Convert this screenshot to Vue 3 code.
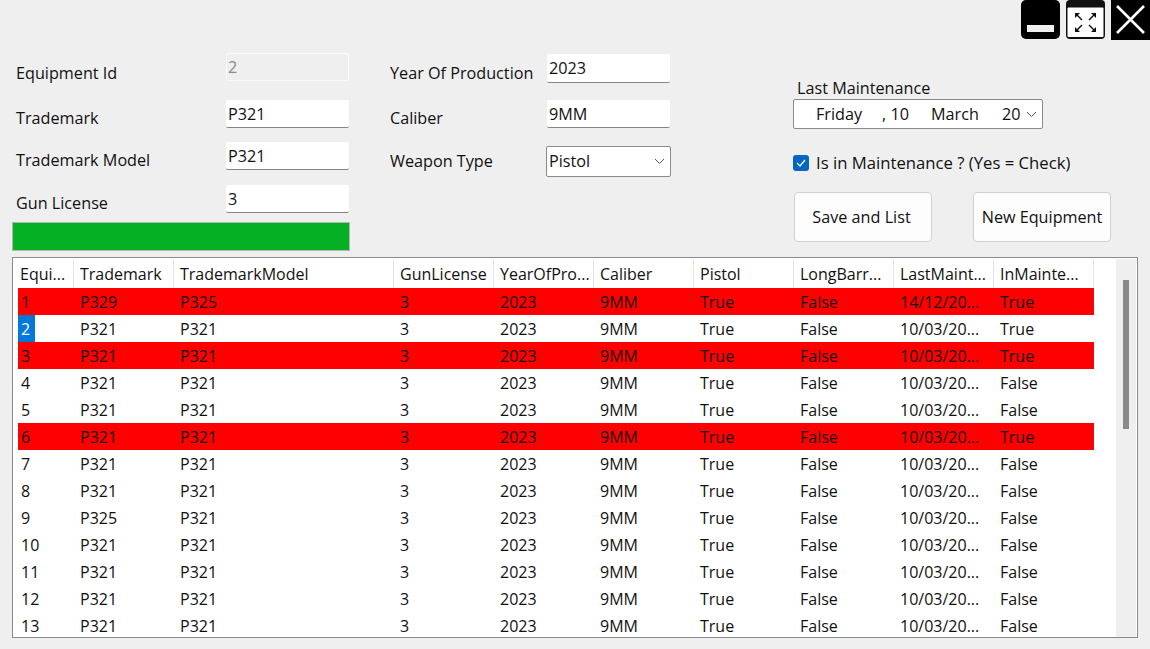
<script setup>
const columns = [
  { label: 'Equi...', w: 56 },
  { label: 'Trademark', w: 100 },
  { label: 'TrademarkModel', w: 220 },
  { label: 'GunLicense', w: 100 },
  { label: 'YearOfPro...', w: 100 },
  { label: 'Caliber', w: 100 },
  { label: 'Pistol', w: 100 },
  { label: 'LongBarr...', w: 100 },
  { label: 'LastMaint...', w: 100 },
  { label: 'InMainte...', w: 100 }
]
const gridCols = columns.map(c => c.w + 'px').join(' ')
const mk = (id, tm, model, date, maint) => ({ cells: [id, tm, model, '3', '2023', '9MM', 'True', 'False', date, maint], red: maint === 'True' && id !== 2 })
const d = '10/03/20...'
const rows = [
  mk(1, 'P329', 'P325', '14/12/20...', 'True'),
  mk(2, 'P321', 'P321', d, 'True'),
  mk(3, 'P321', 'P321', d, 'True'),
  mk(4, 'P321', 'P321', d, 'False'),
  mk(5, 'P321', 'P321', d, 'False'),
  mk(6, 'P321', 'P321', d, 'True'),
  mk(7, 'P321', 'P321', d, 'False'),
  mk(8, 'P321', 'P321', d, 'False'),
  mk(9, 'P325', 'P321', d, 'False'),
  mk(10, 'P321', 'P321', d, 'False'),
  mk(11, 'P321', 'P321', d, 'False'),
  mk(12, 'P321', 'P321', d, 'False'),
  mk(13, 'P321', 'P321', d, 'False')
]
</script>

<template>
  <div class="page">
    <div class="winbar">
      <svg class="win" width="39" height="39" viewBox="0 0 39 39">
        <rect width="39" height="39" rx="5" fill="#000" />
        <rect x="6" y="25" width="27" height="7" fill="#efefef" />
      </svg>
      <svg class="win" width="39" height="39" viewBox="0 0 39 39">
        <rect width="39" height="39" rx="4" fill="#111" />
        <rect x="1.5" y="7.5" width="36" height="29.5" rx="1" fill="#fff" />
        <g stroke="#111" stroke-width="1.4" fill="none">
          <path d="M10 14 L16 20" />
          <path d="M29 14 L23 20" />
          <path d="M10 31 L16 25" />
          <path d="M29 31 L23 25" />
        </g>
        <g fill="#111">
          <path d="M9 13h5l-5 5z" />
          <path d="M30 13h-5l5 5z" />
          <path d="M9 32h5l-5-5z" />
          <path d="M30 32h-5l5-5z" />
        </g>
      </svg>
      <svg class="win close" width="39" height="40" viewBox="0 0 39 40">
        <rect width="39" height="40" fill="#000" />
        <path d="M6 6 L33 33 M33 6 L6 33" stroke="#fff" stroke-width="2.6" />
      </svg>
    </div>

    <div class="form">
      <div class="col-left">
        <div class="field f1">
          <span class="label l1">Equipment Id</span>
          <div class="input disabled">2</div>
        </div>
        <div class="field f2">
          <span class="label">Trademark</span>
          <div class="input">P321</div>
        </div>
        <div class="field f3">
          <span class="label">Trademark Model</span>
          <div class="input">P321</div>
        </div>
        <div class="field f4">
          <span class="label">Gun License</span>
          <div class="input">3</div>
        </div>
        <div class="progress"></div>
      </div>

      <div class="col-mid">
        <div class="field m1">
          <span class="label l1b">Year Of Production</span>
          <div class="input tall">2023</div>
        </div>
        <div class="field m2">
          <span class="label">Caliber</span>
          <div class="input">9MM</div>
        </div>
        <div class="field m3">
          <span class="label lw">Weapon Type</span>
          <div class="combo">
            <span>Pistol</span>
            <svg width="11" height="7" viewBox="0 0 11 7"><path d="M1 1 L5.5 5.5 L10 1" fill="none" stroke="#555" stroke-width="1" /></svg>
          </div>
        </div>
      </div>

      <div class="col-right">
        <div class="lm-label">Last Maintenance</div>
        <div class="date">
          <span class="d-day">Friday</span>
          <span class="d-num">, 10</span>
          <span class="d-mon">March</span>
          <span class="d-yr">20</span>
          <svg width="11" height="7" viewBox="0 0 11 7"><path d="M1 1 L5.5 5.5 L10 1" fill="none" stroke="#555" stroke-width="1" /></svg>
        </div>
        <div class="check">
          <span class="box">
            <svg width="10" height="8" viewBox="0 0 10 8"><path d="M1 4 L4 7 L9 1" fill="none" stroke="#fff" stroke-width="1.3" /></svg>
          </span>
          <span class="check-text">Is in Maintenance ? (Yes = Check)</span>
        </div>
        <div class="buttons">
          <div class="btn first">Save and List</div>
          <div class="btn">New Equipment</div>
        </div>
      </div>
    </div>

    <div class="table">
      <div class="table-body">
        <div class="head" :style="{ gridTemplateColumns: gridCols }">
          <div v-for="c in columns" :key="c.label" class="hcell">{{ c.label }}</div>
        </div>
        <div
          v-for="r in rows"
          :key="r.cells[0]"
          class="row"
          :class="{ red: r.red }"
          :style="{ gridTemplateColumns: gridCols }"
        >
          <div v-for="(v, i) in r.cells" :key="i" class="cell">
            <span v-if="i === 0 && v === 2" class="sel">{{ v }}</span>
            <template v-else>{{ v }}</template>
          </div>
        </div>
      </div>
      <div class="scroll"><div class="thumb"></div></div>
    </div>
  </div>
</template>

<style>
html, body { margin: 0; background: #efefef; overflow: hidden; }
</style>

<style scoped>
.page {
  width: 1150px;
  height: 649px;
  background: #efefef;
  font-family: "Open Sans", "Noto Sans", sans-serif;
  font-size: 16.2px;
  color: #111;
  overflow: hidden;
  display: flex;
  flex-direction: column;
}
.winbar {
  height: 40px;
  display: flex;
  justify-content: flex-end;
  align-items: flex-start;
  gap: 6px;
}
.win { display: block; }
.form {
  height: 217px;
  display: flex;
  padding-left: 12px;
}
.col-left { width: 338px; margin-right: 40px; display: flex; flex-direction: column; }
.col-mid { width: 281px; margin-right: 122px; display: flex; flex-direction: column; }
.col-right { width: 320px; display: flex; flex-direction: column; }

.field { display: flex; align-items: flex-start; height: 28px; }
.label { flex: none; box-sizing: border-box; line-height: 20px; margin-top: 8px; white-space: nowrap; }
.col-left .label { width: 214px; padding-left: 4px; }
.col-mid .label { width: 157px; }
.col-left .label.l1 { margin-top: 10px; }
.col-mid .label.l1b { margin-top: 9px; }
.col-mid .label.lw { margin-top: 5px; }
.f1 { margin-top: 13px; }
.f2 { margin-top: 19px; }
.f3 { margin-top: 14px; }
.f4 { margin-top: 15px; }
.m1 { margin-top: 14px; height: 29px; }
.m2 { margin-top: 17px; }
.m3 { margin-top: 18px; height: 31px; }

.input {
  flex: none;
  box-sizing: border-box;
  width: 123px;
  height: 28px;
  background: #fff;
  border-bottom: 1px solid #858585;
  border-radius: 2px;
  padding-left: 2px;
  line-height: 28px;
}
.input.tall { height: 29px; }
.input.disabled {
  background: #efefef;
  border: 1px solid #fafafa;
  color: #8a8a8a;
  padding-left: 1px;
  line-height: 26px;
}
.progress {
  box-sizing: border-box;
  margin-top: 9px;
  height: 29px;
  width: 338px;
  background: #06b025;
  border: 1px solid #b4b4b4;
}
.combo {
  flex: none;
  box-sizing: border-box;
  width: 125px;
  height: 31px;
  margin-left: -1px;
  background: #fff;
  border: 1px solid #8a8a8a;
  border-radius: 2px;
  display: flex;
  align-items: center;
  justify-content: space-between;
  padding: 0 5px 2px 2px;
}
.combo svg { margin-top: 2px; }
.lm-label { margin: 38px 0 0 4px; line-height: 21px; }
.date {
  box-sizing: border-box;
  width: 250px;
  height: 30px;
  background: #fff;
  border: 1px solid #8a8a8a;
  border-radius: 2px;
  display: flex;
  align-items: center;
}
.date span { white-space: nowrap; flex: none; }
.d-day { margin-left: 22px; width: 66px; }
.d-num { width: 49px; }
.d-mon { width: 71px; }
.d-yr { width: 24px; }
.check {
  margin-top: 26px;
  height: 16px;
  display: flex;
  align-items: center;
  gap: 7px;
}
.check-text { font-size: 16.7px; white-space: nowrap; line-height: 20px; }
.box {
  flex: none;
  width: 16px;
  height: 16px;
  background: #0067c0;
  border-radius: 3px;
  display: flex;
  align-items: center;
  justify-content: center;
}
.buttons { margin: 21px 0 0 1px; display: flex; gap: 41px; }
.btn {
  box-sizing: border-box;
  width: 138px;
  height: 50px;
  background: #fdfdfd;
  border: 1px solid #d0d0d0;
  border-radius: 4px;
  display: flex;
  align-items: center;
  justify-content: center;
}
.btn.first { padding-right: 3px; }

.table {
  box-sizing: border-box;
  margin-left: 12px;
  width: 1126px;
  height: 381px;
  background: #fff;
  border: 1px solid #8a8a8f;
  position: relative;
  overflow: hidden;
  font-size: 16px;
}
.table-body { margin: 1px 0 0 5px; width: 1076px; }
.head, .row { display: grid; }
.head { height: 29px; }
.hcell {
  box-sizing: border-box;
  padding-left: 6px;
  line-height: 30px;
  border-right: 1px solid #e5e5e5;
  white-space: nowrap;
  overflow: hidden;
}
.hcell:first-child { padding-left: 2px; }
.row { height: 27px; }
.row.red { background: #ff0000; }
.cell {
  padding-left: 6px;
  line-height: 29px;
  height: 27px;
  white-space: nowrap;
  overflow: hidden;
}
.cell:first-child { padding-left: 3px; }
.sel {
  display: inline-block;
  width: 17px;
  height: 27px;
  margin-left: -3px;
  padding-left: 3px;
  box-sizing: border-box;
  background: #0078d7;
  color: #fff;
  vertical-align: top;
}
.scroll {
  position: absolute;
  right: 1px;
  top: 1px;
  bottom: 0;
  width: 20px;
  background: #efefef;
}
.thumb {
  position: absolute;
  left: 7px;
  top: 21px;
  width: 6px;
  height: 149px;
  background: #8a8a8a;
}
</style>
